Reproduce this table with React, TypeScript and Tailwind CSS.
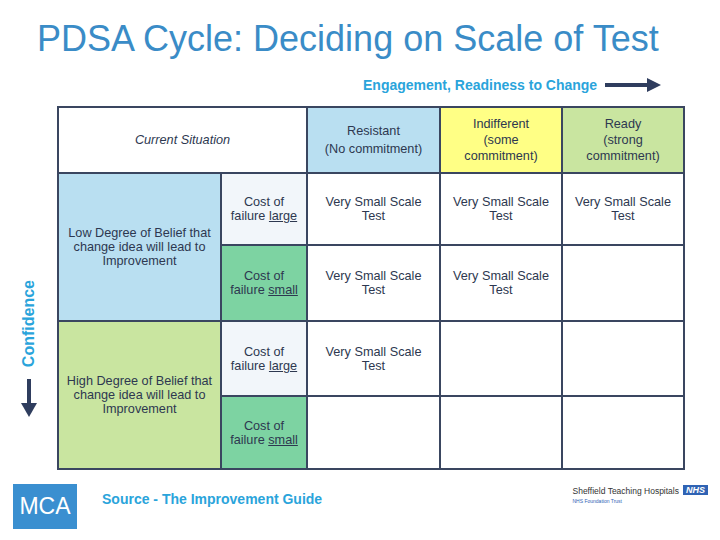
import React from "react";

// PDSA scale-of-test matrix, one slide.

const font = "font-['Liberation_Sans',Arial,sans-serif]";

function Cell({ bg = "bg-white", children, className = "" }: { bg?: string; children?: React.ReactNode; className?: string }) {
    return (
        <div className={`${bg} flex items-center justify-center text-center text-[12.7px] leading-[14px] text-[#2d3850] ${className}`}>
            {children}
        </div>
    );
}

const VSST = () => <>Very Small Scale<br />Test</>;

function Cost({ size }: { size: "large" | "small" }) {
    return (
        <Cell bg={size === "large" ? "bg-[#f2f6fa]" : "bg-[#7dd3a2]"}>
            <span>Cost of<br />failure <span className="underline">{size}</span></span>
        </Cell>
    );
}

export default function App() {
    return (
        <div className={`w-[720px] h-[540px] bg-white overflow-hidden ${font}`}>
            <h1 className="pt-[21px] pl-[37px] text-[36px] leading-[36px] text-[#3a8cc7] font-normal">
                PDSA Cycle: Deciding on Scale of Test
            </h1>

            <div className="mt-[20px] pl-[363px] flex items-center gap-[8px]">
                <span className="text-[14px] leading-[16px] font-bold text-[#2aa4db]">Engagement, Readiness to Change</span>
                <svg width="56" height="16" viewBox="0 0 56 16">
                    <rect x="0" y="6" width="44" height="4" fill="#2f3d5e" />
                    <path d="M42 1 L56 8 L42 15 Z" fill="#2f3d5e" />
                </svg>
            </div>

            <div className="mt-[13px] flex">
                <div className="w-[57px] flex flex-col items-center pt-[174px]">
                    <span className="[writing-mode:vertical-rl] rotate-180 text-[16px] leading-[16px] font-bold text-[#2aa4db]">
                        Confidence
                    </span>
                    <svg width="16" height="38" viewBox="0 0 16 38" className="mt-[12px]">
                        <rect x="6" y="0" width="4" height="28" fill="#2f3d5e" />
                        <path d="M0 24 L16 24 L8 38 Z" fill="#2f3d5e" />
                    </svg>
                </div>

                <div className="grid grid-cols-[161px_84px_131px_120px_120px] grid-rows-[64px_70px_74px_73px_71px] gap-[2px] p-[2px] bg-[#3a4660]">
                    <Cell className="col-span-2 italic">Current Situation</Cell>
                    <Cell bg="bg-[#b9dff1]" className="leading-[18px]"><span>Resistant<br />(No commitment)</span></Cell>
                    <Cell bg="bg-[#ffff85]" className="leading-[16px]"><span>Indifferent<br />(some<br />commitment)</span></Cell>
                    <Cell bg="bg-[#c9e5a0]" className="leading-[16px]"><span>Ready<br />(strong<br />commitment)</span></Cell>

                    <Cell bg="bg-[#b9dff1]" className="row-span-2 px-[6px] leading-[14.5px]">
                        Low Degree of Belief that change idea will lead to Improvement
                    </Cell>
                    <Cost size="large" />
                    <Cell><span><VSST /></span></Cell>
                    <Cell><span><VSST /></span></Cell>
                    <Cell><span><VSST /></span></Cell>

                    <Cost size="small" />
                    <Cell><span><VSST /></span></Cell>
                    <Cell><span><VSST /></span></Cell>
                    <Cell />

                    <Cell bg="bg-[#c9e5a0]" className="row-span-2 px-[6px] leading-[14.5px]">
                        High Degree of Belief that change idea will lead to Improvement
                    </Cell>
                    <Cost size="large" />
                    <Cell><span><VSST /></span></Cell>
                    <Cell />
                    <Cell />

                    <Cost size="small" />
                    <Cell />
                    <Cell />
                    <Cell />
                </div>
            </div>

            <div className="mt-[14px] flex items-start">
                <div className="ml-[13px] w-[64px] h-[45px] bg-[#3a8fd0] flex items-center justify-center text-white text-[23px] leading-none">
                    MCA
                </div>
                <span className="ml-[25px] mt-[7px] text-[14px] leading-[16px] font-bold text-[#2aa4db]">
                    Source - The Improvement Guide
                </span>
                <div className="ml-auto mr-[12px] flex flex-col">
                    <div className="flex items-center gap-[4px]">
                        <span className="text-[8.5px] leading-[10px] text-[#333] mt-[2px]">Sheffield Teaching Hospitals</span>
                        <span className="bg-[#2f63b4] text-white font-bold italic text-[9px] leading-[10px] px-[3px]">NHS</span>
                    </div>
                    <span className="text-[5px] leading-[6px] text-[#2f63b4] mt-[2px]">NHS Foundation Trust</span>
                </div>
            </div>
        </div>
    );
}
